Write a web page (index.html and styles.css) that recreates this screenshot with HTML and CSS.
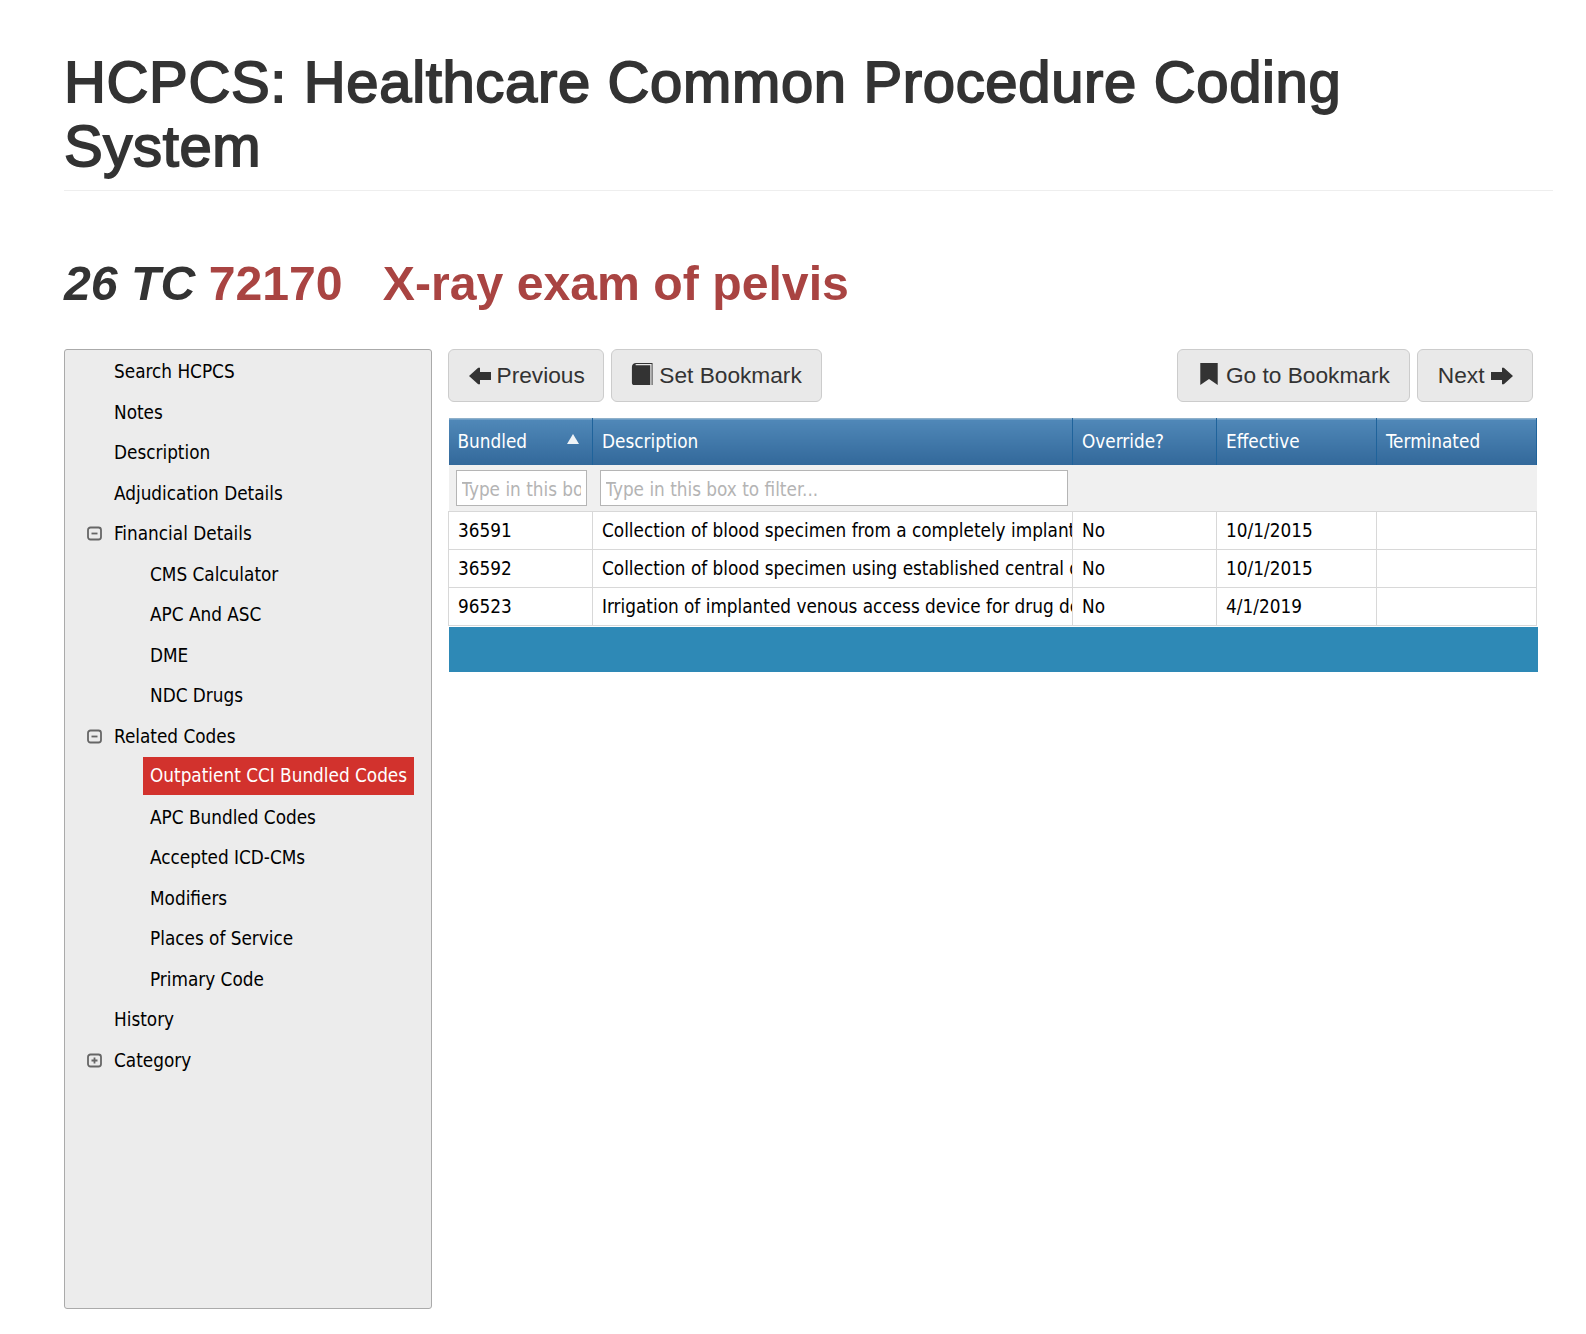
FILE: index.html
```html
<!DOCTYPE html>
<html lang="en">
<head>
    <meta charset="UTF-8">
    <title>HCPCS: Healthcare Common Procedure Coding System</title>
    <link rel="stylesheet" href="styles.css">
</head>
<body>
    <div class="container">
        <div class="page-header">
            <h1>HCPCS: Healthcare Common Procedure Coding System</h1>
        </div>
        <h2 class="code-title"><em>26 TC</em> <span class="code-red">72170 &nbsp; X-ray exam of pelvis</span></h2>

        <div class="content">
            <div class="sidebar">
                <div class="tree-item">Search HCPCS</div>
                <div class="tree-item">Notes</div>
                <div class="tree-item">Description</div>
                <div class="tree-item">Adjudication Details</div>
                <div class="tree-item">
                    <svg class="toggle" viewBox="0 0 15 15"><rect x="1" y="1.5" width="13" height="12" rx="2.5"/><path d="M4.5 7.5h6"/></svg>
                    Financial Details
                </div>
                <div class="tree-item child">CMS Calculator</div>
                <div class="tree-item child">APC And ASC</div>
                <div class="tree-item child">DME</div>
                <div class="tree-item child">NDC Drugs</div>
                <div class="tree-item">
                    <svg class="toggle" viewBox="0 0 15 15"><rect x="1" y="1.5" width="13" height="12" rx="2.5"/><path d="M4.5 7.5h6"/></svg>
                    Related Codes
                </div>
                <div class="tree-item child active"><span>Outpatient CCI Bundled Codes</span></div>
                <div class="tree-item child">APC Bundled Codes</div>
                <div class="tree-item child">Accepted ICD-CMs</div>
                <div class="tree-item child">Modifiers</div>
                <div class="tree-item child">Places of Service</div>
                <div class="tree-item child">Primary Code</div>
                <div class="tree-item">History</div>
                <div class="tree-item">
                    <svg class="toggle" viewBox="0 0 15 15"><rect x="1" y="1.5" width="13" height="12" rx="2.5"/><path d="M4.5 7.5h6M7.5 4.5v6"/></svg>
                    Category
                </div>
            </div>

            <div class="main">
                <div class="toolbar">
                    <a class="btn btn-prev">
                        <svg class="icon" viewBox="0 0 24 24"><path d="M0 12 10 3h2v4.700h12v8.600H12V21h-2z"/></svg>
                        Previous
                    </a>
                    <a class="btn">
                        <svg class="icon icon-up" viewBox="0 0 24 24"><path d="M5.500 0H23.500V24H22.500V1H6C4.500 1 4.500 2.500 6 2.500H21V24H3.500C2 24 1 23 1 21.500V4C1 1.500 3 0 5.500 0z"/></svg>
                        Set Bookmark
                    </a>
                    <a class="btn push-right">
                        <svg class="icon icon-up" viewBox="0 0 24 24"><path d="M2.500 0h19v24L12 17.500 2.500 24z"/></svg>
                        Go to Bookmark
                    </a>
                    <a class="btn">
                        Next
                        <svg class="icon" viewBox="0 0 24 24"><path d="M24 12 14 3h-2v4.700H0v8.600h12V21h2z"/></svg>
                    </a>
                </div>

                <table class="grid">
                    <colgroup>
                        <col class="col-bundled">
                        <col class="col-desc">
                        <col class="col-override">
                        <col class="col-effective">
                        <col class="col-terminated">
                    </colgroup>
                    <thead>
                        <tr class="head-row">
                            <th>Bundled<span class="sort-up"></span></th>
                            <th>Description</th>
                            <th>Override?</th>
                            <th>Effective</th>
                            <th>Terminated</th>
                        </tr>
                        <tr class="filter-row">
                            <td><input class="filter-small" type="text" placeholder="Type in this box to filter..."></td>
                            <td><input class="filter-wide" type="text" placeholder="Type in this box to filter..."></td>
                            <td></td>
                            <td></td>
                            <td></td>
                        </tr>
                    </thead>
                    <tbody>
                        <tr>
                            <td>36591</td>
                            <td>Collection of blood specimen from a completely implanted venous access device</td>
                            <td>No</td>
                            <td>10/1/2015</td>
                            <td></td>
                        </tr>
                        <tr>
                            <td>36592</td>
                            <td>Collection of blood specimen using established central or peripheral catheter</td>
                            <td>No</td>
                            <td>10/1/2015</td>
                            <td></td>
                        </tr>
                        <tr>
                            <td>96523</td>
                            <td>Irrigation of implanted venous access device for drug delivery systems</td>
                            <td>No</td>
                            <td>4/1/2019</td>
                            <td></td>
                        </tr>
                    </tbody>
                </table>
                <div class="grid-footer"></div>
            </div>
        </div>
    </div>
</body>
</html>
```

FILE: styles.css
```css
* {
    box-sizing: border-box;
}
body {
    margin: 0;
    background-color: #fff;
    font-family: "Liberation Sans", Arial, sans-serif;
    color: #333;
}
.container {
    padding: 0 33px 0 64px;
}
.page-header {
    padding: 50px 0 12px;
    border-bottom: 1px solid #eee;
}
h1 {
    margin: 0;
    font-size: 58px;
    line-height: 64px;
    font-weight: 400;
    letter-spacing: 0.65px;
    -webkit-text-stroke: 1.8px #333;
}
.code-title {
    margin: 62px 0 36px;
    font-size: 48.2px;
    line-height: 60px;
    font-weight: 700;
}
.code-red {
    color: #a94442;
}
.content {
    display: flex;
    gap: 16px;
}
.sidebar {
    width: 368px;
    height: 960px;
    flex-shrink: 0;
    padding: 2px 17px 0 0;
    background-color: #ececec;
    border: 1px solid #aaa;
    border-radius: 3px;
    font-family: "DejaVu Sans Condensed", "DejaVu Sans", sans-serif;
    font-size: 18.8px;
    color: #000;
}
.tree-item {
    position: relative;
    height: 40.5px;
    padding-left: 49px;
    line-height: 40px;
    white-space: nowrap;
}
.tree-item.child {
    padding-left: 85px;
}
.tree-item.active {
    padding-left: 78px;
}
.tree-item.active span {
    display: block;
    height: 38px;
    padding-left: 7px;
    line-height: 37px;
    background-color: #d2322d;
    color: #fff;
}
.toggle {
    position: absolute;
    left: 22px;
    top: 12px;
    width: 15px;
    height: 15px;
    fill: none;
    stroke: #666;
    stroke-width: 1.8;
}
.main {
    width: 1088px;
}
.toolbar {
    display: flex;
    gap: 7px;
    width: 1085px;
    margin-bottom: 16px;
}
.btn {
    display: flex;
    align-items: center;
    gap: 6px;
    height: 53px;
    padding: 0 19.5px;
    background-color: #e9e9e9;
    border: 1px solid #ccc;
    border-radius: 6px;
    font-size: 22.7px;
    color: #333;
}
.btn-prev {
    padding-right: 18px;
}
.push-right {
    margin-left: auto;
}
.icon {
    width: 22px;
    height: 22px;
    fill: #333;
}
.icon-up {
    margin-top: -3px;
}
.grid {
    width: 100%;
    table-layout: fixed;
    border-collapse: collapse;
    font-family: "DejaVu Sans Condensed", "DejaVu Sans", sans-serif;
    font-size: 18.8px;
    color: #000;
}
.col-bundled {
    width: 144px;
}
.col-desc {
    width: 480px;
}
.col-override {
    width: 144px;
}
.col-effective {
    width: 160px;
}
.col-terminated {
    width: 160px;
}
.head-row th {
    height: 46px;
    padding: 0 9px;
    position: relative;
    background: linear-gradient(#5088b8, #32689a);
    border-top: 1px solid #8fb0c9;
    border-right: 1px solid #1f639b;
    box-shadow: inset 0 1px 0 #6d9dc6;
    color: #fff;
    font-weight: 400;
    text-align: left;
}
.sort-up {
    position: absolute;
    right: 13px;
    top: 15px;
    border-left: 6px solid transparent;
    border-right: 6px solid transparent;
    border-bottom: 10px solid #eef3f7;
}
.filter-row td {
    height: 47px;
    padding: 0;
    background-color: #f0f0f0;
    border-bottom: 1px solid #d8d8d8;
}
.filter-row input {
    display: block;
    height: 36px;
    margin-left: 7px;
    padding: 3px 5px 0;
    background-color: #fff;
    border: 1px solid #b5b5b5;
    font-family: inherit;
    font-size: 18.8px;
}
.filter-row input::placeholder {
    color: #b4b4b4;
}
.filter-small {
    width: 131px;
}
.filter-wide {
    width: 468px;
}
tbody td {
    height: 38px;
    padding: 0 9px;
    overflow: hidden;
    white-space: nowrap;
    border-right: 1px solid #d8d8d8;
    border-bottom: 1px solid #d8d8d8;
}
tbody td:first-child {
    border-left: 1px solid #d8d8d8;
}
.grid-footer {
    height: 45px;
    margin: 1px -2px 0 1px;
    background-color: #2e89b6;
}
```
